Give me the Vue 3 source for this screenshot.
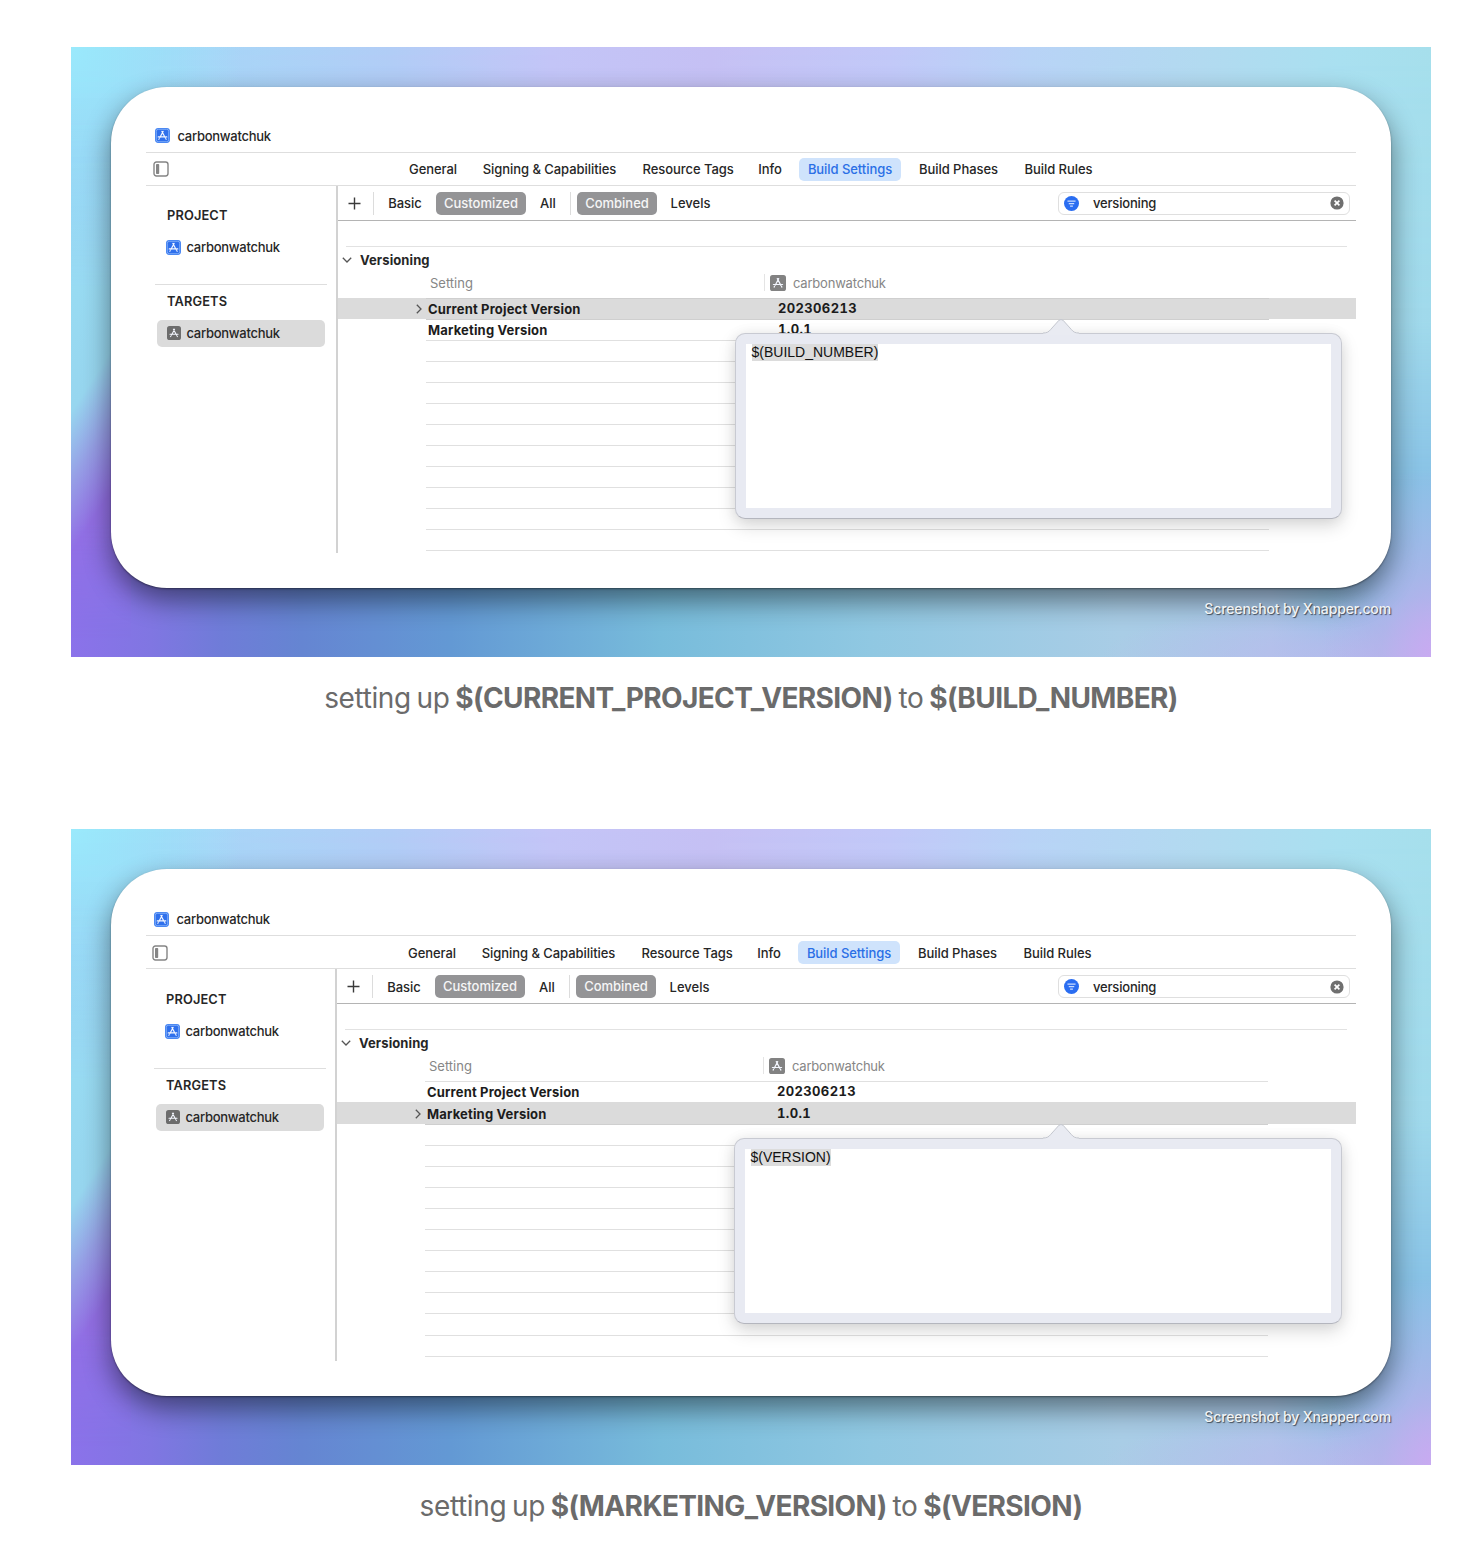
<script setup>
const tabs = [
  { label: 'General', w: 48, gap: 0 },
  { label: 'Signing & Capabilities', w: 134, gap: 25.5 },
  { label: 'Resource Tags', w: 90, gap: 26 },
  { label: 'Info', w: 24, gap: 25.5 },
  { label: 'Build Settings', w: 102, gap: 17, active: true },
  { label: 'Build Phases', w: 79, gap: 18 },
  { label: 'Build Rules', w: 68, gap: 26.5 },
]

const blanks = (n) => Array.from({ length: n }, () => ({}))

const shots = [
  {
    id: 'build',
    rows: [
      { name: 'Current Project Version', value: '202306213', selected: true },
      { name: 'Marketing Version', value: '1.0.1' },
      ...blanks(10),
    ],
    popover: '$(BUILD_NUMBER)',
    from: '$(CURRENT_PROJECT_VERSION)',
    to: '$(BUILD_NUMBER)',
  },
  {
    id: 'version',
    rows: [
      { name: 'Current Project Version', value: '202306213' },
      { name: 'Marketing Version', value: '1.0.1', selected: true },
      ...blanks(11),
    ],
    popover: '$(VERSION)',
    from: '$(MARKETING_VERSION)',
    to: '$(VERSION)',
  },
]
</script>

<template>
  <svg class="defs" width="0" height="0" aria-hidden="true">
    <symbol id="app-glyph" viewBox="0 0 16 16">
      <path d="M8.700 3.600 5.200 10.200M7.300 3.600 10.900 10.400M3.400 9.500h5.900M11.300 9.500h1.300M4.500 11.400l-.4.7M11.500 11.400l.4.7" fill="none" stroke="#f4f7ff" stroke-width="1.2" stroke-linecap="round" />
    </symbol>
  </svg>
  <main class="page">
    <figure v-for="s in shots" :key="s.id" class="figure" :class="s.id">
      <div class="shot">
        <div class="window">
          <header class="title">
            <svg class="app blue"><rect width="15" height="15" rx="3.4" /><rect class="ring" x="1.3" y="1.3" width="12.4" height="12.4" rx="2" /><use href="#app-glyph" width="15" height="15" /></svg>
            <span>carbonwatchuk</span>
          </header>
          <nav class="tabs">
            <svg class="panel" viewBox="0 0 16 16"><rect x="1" y="1" width="14" height="14" rx="2.4" fill="none" stroke="#858585" stroke-width="1.4" /><rect x="3" y="3" width="3.200" height="10" rx=".8" fill="#858585" /></svg>
            <span v-for="t in tabs" :key="t.label" class="tab" :class="{ active: t.active }" :style="{ width: t.w + 'px', marginLeft: t.gap + 'px' }">{{ t.label }}</span>
          </nav>
          <div class="body">
            <aside class="side">
              <h4>PROJECT</h4>
              <div class="item">
                <svg class="app blue"><rect width="15" height="15" rx="3.4" /><rect class="ring" x="1.3" y="1.3" width="12.4" height="12.4" rx="2" /><use href="#app-glyph" width="15" height="15" /></svg>
                <span>carbonwatchuk</span>
              </div>
              <hr />
              <h4>TARGETS</h4>
              <div class="item chosen">
                <svg class="app small"><rect width="14" height="14" rx="2.6" /><use href="#app-glyph" width="14" height="14" /></svg>
                <span>carbonwatchuk</span>
              </div>
            </aside>
            <section class="main">
              <div class="bar">
                <svg class="plus" viewBox="0 0 13 13"><path d="M6.5.5v12M.5 6.5h12" stroke="#3a3a3a" stroke-width="1.4" /></svg>
                <i class="sep first" />
                <span class="word basic">Basic</span>
                <span class="pill custom">Customized</span>
                <span class="word all">All</span>
                <i class="sep" />
                <span class="pill combined">Combined</span>
                <span class="word levels">Levels</span>
                <div class="search">
                  <svg class="filter" viewBox="0 0 16 16"><circle cx="8" cy="8" r="8" fill="#2a6df1" /><path d="M3.700 5.400h8.600M5.100 8.100h5.800M6.500 10.800h3" stroke="#c9dcff" stroke-width="1.4" /></svg>
                  <span>versioning</span>
                  <svg class="clear" viewBox="0 0 14 14"><circle cx="7" cy="7" r="6.6" fill="#6f6f6f" /><path d="M4.600 4.600l4.800 4.800M9.400 4.600 4.600 9.400" stroke="#fff" stroke-width="1.7" /></svg>
                </div>
              </div>
              <div class="group">
                <svg class="chev" viewBox="0 0 10 6"><path d="M.8.8 5 5 9.200.8" fill="none" stroke="#555" stroke-width="1.3" /></svg>
                <span>Versioning</span>
              </div>
              <div class="columns">
                <span class="setting">Setting</span>
                <span class="target">
                  <svg class="app"><rect width="16" height="16" rx="2.6" /><use href="#app-glyph" width="16" height="16" /></svg>
                  <span>carbonwatchuk</span>
                </span>
              </div>
              <div class="rows">
                <div v-for="(r, i) in s.rows" :key="i" class="row" :class="{ selected: r.selected }">
                  <div class="cells">
                    <template v-if="r.name">
                      <svg v-if="r.selected" class="disclosure" viewBox="0 0 6 10"><path d="M.8.8 5 5 .8 9.200" fill="none" stroke="#555" stroke-width="1.3" /></svg>
                      <span class="name">{{ r.name }}</span>
                      <span class="value">{{ r.value }}</span>
                    </template>
                  </div>
                  <div v-if="r.selected" class="popover">
                    <svg class="arrow" viewBox="0 0 36 16"><path d="M0 14.700C4 14.700 5.500 13.600 7.500 11.300L16 1.800Q18 .2 20 1.800L28.500 11.300C30.500 13.600 32 14.700 36 14.700V16H0Z" fill="#e9ebf2" /><path d="M0 14.500C4 14.500 5.500 13.500 7.500 11.200L16 1.700Q18 .2 20 1.700L28.500 11.200C30.500 13.500 32 14.500 36 14.500" fill="none" stroke="#c4c7cf" stroke-width="1" /></svg>
                    <div class="editor"><span>{{ s.popover }}</span></div>
                  </div>
                </div>
              </div>
            </section>
          </div>
        </div>
        <div class="credit">Screenshot by Xnapper.com</div>
      </div>
      <figcaption>setting up <b>{{ s.from }}</b> to <b>{{ s.to }}</b></figcaption>
    </figure>
  </main>
</template>

<style>
body {
  margin: 0;
  background: #fff;
}
</style>

<style scoped>
* {
  box-sizing: border-box;
}
.defs {
  display: block;
}
.page {
  width: 1478px;
  height: 1566px;
  padding: 47px 47px 0 71px;
  overflow: hidden;
  font: 450 13px/16px Inter, 'Liberation Sans', sans-serif;
  color: #262626;
}
.figure {
  margin: 0;
  height: 782px;
  --dx: 0px;
}
.version {
  --dx: -1px;
}
.shot {
  width: 1360px;
  height: 610px;
  padding: 39.5px 40px 0;
  overflow: hidden;
  position: relative;
  background:
    radial-gradient(ellipse 110px 190px at 100% 100%, #c8aaf1, #b4b1eaaa 45%, #b0b1ea00),
    radial-gradient(ellipse 330px 60px at 100% 100%, #bfb8ee, #bfb8ee00),
    linear-gradient(to right, #8b72ea 0, #8076e2 80px, #6f7cd8 150px, #6585d2 230px, #6399d4 380px, #78bcdb 590px, #90c8e2 800px, #a9cde6 1050px, #a9c8e8 1200px, #88c2e6 1300px);
}
.version .shot {
  height: 636px;
}
.shot::before {
  content: '';
  position: absolute;
  inset: 0;
  background:
    radial-gradient(ellipse 170px 300px at 0 0, #9aeafc, #9aeafc00),
    linear-gradient(to right, #98d4f0 0, #a8d6f7 140px, #b2cdf6 320px, #c4c5f7 480px, #c6c0f4 640px, #c2c8f8 820px, #b8d3f6 960px, #b2daf0 1130px, #a9e0f0 1270px, #a6dfec 1360px);
  -webkit-mask-image: linear-gradient(#000 0, #000c 45%, #0000 72%);
  mask-image: linear-gradient(#000 0, #000c 45%, #0000 72%);
}
.shot::after {
  content: '';
  position: absolute;
  inset: 0 auto 0 0;
  width: 60px;
  background: linear-gradient(123deg, #9ae6f9 0, #97d6ef 52%, #969fe6 62%, #926fe4 72%, #8c70e8 92%);
  -webkit-mask-image: linear-gradient(#0000 12%, #000 40%, #000 78%, #0000 97%);
  mask-image: linear-gradient(#0000 12%, #000 40%, #000 78%, #0000 97%);
}
.window {
  position: relative;
  z-index: 1;
  width: 1280px;
  height: 501.5px;
  padding: 32px 35px 0;
  border-radius: 56px;
  background: #fff;
  box-shadow: 0 1px 2px #0006, 0 12px 28px #0000007a;
}
.version .window {
  height: 527.5px;
  padding-top: 33px;
}
.title {
  height: 34px;
  padding: 1px 0 0 calc(9px + var(--dx));
  display: flex;
  align-items: center;
  border-bottom: 1px solid #dedede;
}
.app {
  display: block;
  flex: none;
  width: 16px;
  height: 16px;
  fill: #828282;
}
.app.blue {
  width: 15px;
  height: 15px;
  fill: #3f80f2;
}
.app.small {
  width: 14px;
  height: 14px;
  fill: #6c6c6c;
}
.ring {
  fill: #2f70ec;
  stroke: #9cc2fb;
  stroke-width: 0.7;
}
.title span {
  margin-left: 7.5px;
}
.title span,
.item span {
  letter-spacing: -0.27px;
}
.target span {
  letter-spacing: -0.2px;
}
.tabs {
  height: 33px;
  padding: 1px 0 0 calc(7px + var(--dx));
  display: flex;
  align-items: center;
  border-bottom: 1px solid #dedede;
}
.panel {
  width: 16px;
  height: 16px;
  margin-right: 240px;
}
.tab {
  flex: none;
  height: 23px;
  line-height: 23px;
  border-radius: 5px;
  text-align: center;
  white-space: nowrap;
  letter-spacing: -0.06px;
}
.version .tabs,
.version .title {
  padding-top: 2px;
}
.version .tab {
  line-height: 24px;
}
.tab.active {
  background: #cfe3fc;
  color: #2a6fe6;
}
.body {
  display: flex;
  height: 367px;
}
.version .body {
  height: 392px;
}
.side {
  flex: none;
  width: calc(192px + var(--dx));
  padding: 21px 10px 0 calc(9px + var(--dx));
  border-right: 2px solid #d2d2d2;
}
.version .side {
  padding-top: 22px;
}
.side h4 {
  margin: 0 0 0 12px;
  font: 580 12.8px/18px Inter, sans-serif;
  letter-spacing: 0.15px;
}
.side hr {
  height: 1px;
  margin: 23px 0 8.5px;
  border: 0;
  background: #dedede;
  width: 172px;
}
.item {
  width: 168px;
  height: 27px;
  margin: 9px 0 0 2px;
  padding-left: 9px;
  display: flex;
  align-items: center;
  border-radius: 5px;
}
.item span {
  margin-left: 5.5px;
}
.chosen {
  margin-top: 8.5px;
  padding-left: 10px;
  background: #dbdbdb;
}
.main {
  flex: 1;
}
.bar {
  height: 35px;
  padding: 1px 6px 0 10px;
  display: flex;
  align-items: center;
  border-bottom: 1px solid #b4b4b4;
}
.version .bar {
  padding-top: 2px;
}
.plus {
  width: 13px;
  height: 13px;
}
.sep {
  width: 1px;
  height: 23px;
  background: #dcdcdc;
}
.sep.first {
  margin-left: 12px;
}
.word,
.pill {
  text-align: center;
  white-space: nowrap;
}
.basic {
  width: 34px;
  margin: 0 14px;
}
.all {
  width: 16px;
  margin: 0 14px;
}
.levels {
  width: 40px;
  margin-left: 13.5px;
}
.pill {
  height: 23px;
  line-height: 23px;
  border-radius: 5px;
  background: #949496;
  color: #f6f6f6;
}
.custom {
  width: 90px;
}
.combined {
  width: 80px;
  margin-left: 6px;
}
.search {
  width: 292px;
  height: 23px;
  margin-left: auto;
  padding: 0 5px 0 5px;
  display: flex;
  align-items: center;
  border: 1px solid #dfdfdf;
  border-radius: 6px;
}
.filter {
  width: 15px;
  height: 15px;
}
.search span {
  margin-left: 14px;
  letter-spacing: -0.18px;
}
.clear {
  width: 14px;
  height: 14px;
  margin-left: auto;
}
.group {
  height: 26px;
  margin: 25px 9px 0 8px;
  padding-top: 1px;
  border-top: 1px solid #e2e2e2;
  display: flex;
  align-items: center;
  font-weight: 650;
}
.version .group {
  padding-top: 2px;
}
.chev {
  width: 10px;
  height: 6px;
  margin-left: -4px;
}
.group span {
  margin-left: 8px;
  letter-spacing: 0.1px;
}
.columns {
  height: 26px;
  padding: 0 0 4px 92px;
  display: flex;
  align-items: center;
  color: #868686;
  font-weight: 400;
}
.setting {
  width: 334px;
}
.target {
  display: flex;
  align-items: center;
  height: 17px;
  padding-left: 5px;
  border-left: 1px solid #e4e4e4;
}
.target span {
  margin-left: 7px;
}
.row {
  position: relative;
  height: 21.05px;
}
.version .row {
  height: 21.1px;
}
.version .rows {
  margin-top: 0.9px;
}
.cells {
  height: calc(100% + 1px);
  width: 843px;
  margin-left: 87.5px;
  padding-top: 1px;
  display: flex;
  align-items: center;
  border-bottom: 1px solid #e0e0e0;
  font-weight: 650;
  color: #1c1c1c;
}
.row:first-child .cells {
  border-top: 1px solid #e0e0e0;
  padding-top: 0;
}
.selected {
  background: #dbdbdb;
}
.selected .cells,
.build .row:first-child .cells {
  border-color: #cfcfcf;
}
.disclosure {
  width: 6px;
  height: 10px;
  margin-left: -10px;
  margin-right: 4px;
}
.name {
  width: 352.5px;
  padding-left: 2.5px;
  letter-spacing: 0.17px;
}
.value {
  letter-spacing: 0.37px;
  font-variant-numeric: tabular-nums;
  margin-top: -2px;
}
.popover {
  position: absolute;
  z-index: 3;
  left: 397px;
  top: calc(100% + 14px);
  width: 607px;
  height: 186px;
  padding: 10px;
  border: 1px solid #c8cad2;
  border-bottom-color: #b4b6be;
  border-radius: 10px;
  background: #e8eaf2;
  box-shadow: 0 7px 18px #00000026, 0 0 14px #0000000f;
}
.version .popover {
  width: 607.5px;
}
.arrow {
  position: absolute;
  left: 307px;
  top: -15.5px;
  width: 36px;
  height: 17px;
}
.version .arrow {
  left: 307.5px;
}
.editor {
  height: 164px;
  padding-left: 5.5px;
  background: #fff;
  font: 14px/17px 'Liberation Sans', Arial, sans-serif;
  color: #111;
}
.editor span {
  display: inline-block;
  background: #dcdcdc;
}
.credit {
  position: absolute;
  z-index: 2;
  right: 40px;
  bottom: 40px;
  font: 500 14px/16px Inter, sans-serif;
  letter-spacing: -0.12px;
  color: #f0f3f5;
  text-shadow: 1px 1px 1px #0009;
}
figcaption {
  padding-top: 23px;
  text-align: center;
  font: 400 28px/36px Inter, sans-serif;
  letter-spacing: -0.38px;
  word-spacing: -1.7px;
  color: #6b6b6b;
}
figcaption b {
  font-weight: 700;
  letter-spacing: -0.62px;
}
</style>
